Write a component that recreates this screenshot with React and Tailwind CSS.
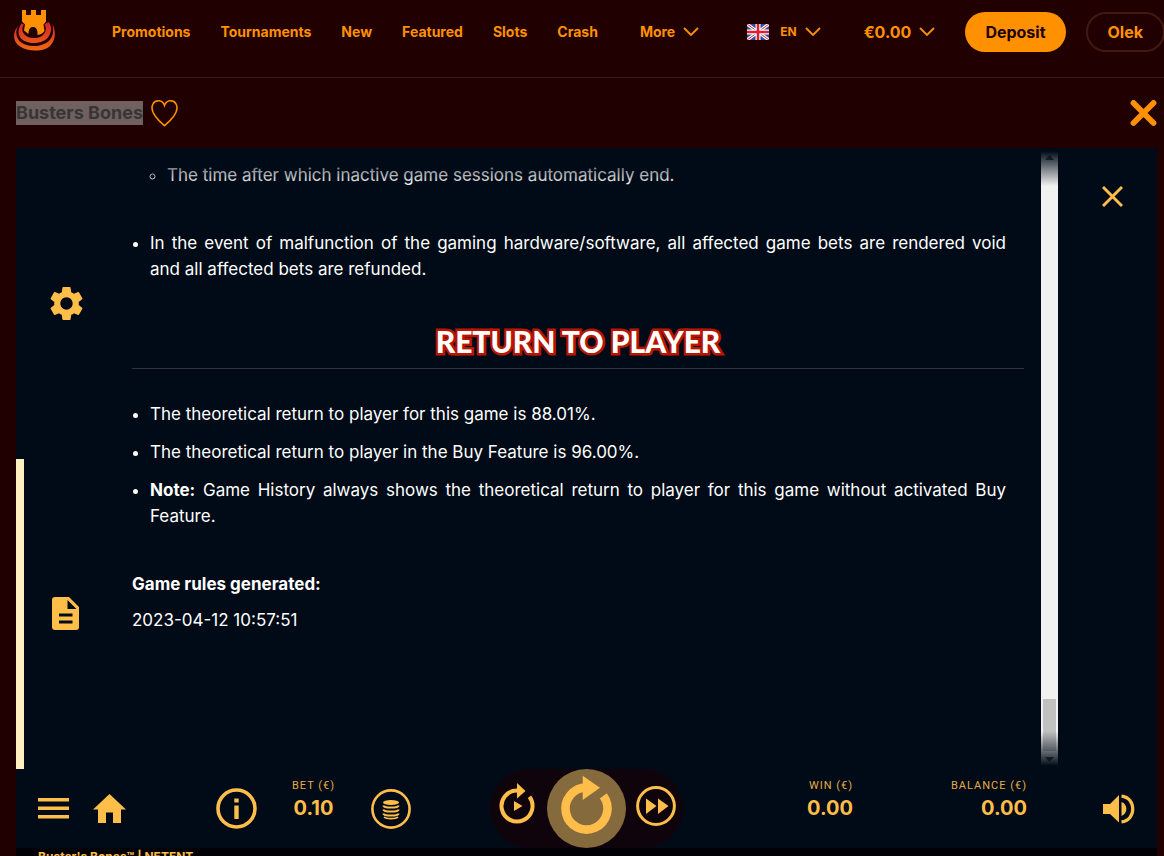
import React, { useState } from 'react';

const navLinks = ['Promotions', 'Tournaments', 'New', 'Featured', 'Slots', 'Crash'];

const Chevron = () => (
  <svg width="16" height="10" viewBox="0 0 16 10" fill="none" stroke="currentColor" strokeWidth="1.8" aria-hidden="true">
    <path d="M1 1 8 8 15 1" />
  </svg>
);

const Logo = () => (
  <svg width="42" height="42" viewBox="0 0 42 42" aria-hidden="true">
    <defs>
      <linearGradient id="ring" x1="0" y1="12" x2="0" y2="41" gradientUnits="userSpaceOnUse">
        <stop offset="0" stopColor="#d3202f" />
        <stop offset="1" stopColor="#f06a12" />
      </linearGradient>
    </defs>
    <path fill="url(#ring)" d="M4 16C-2 23-1 32 6 36.500C14 42 30 42 36 36C42 30 42 21 38.500 14C40.500 23 38 30 31 33.500C24 37 14 37 8 33C2 29 1 22 4 16Z" />
    <path fill="url(#ring)" d="M7.500 13.500C3 20 3.500 27 10 30.800C17 34.300 27 33.800 32.500 29C38 24 38.500 16.500 34.500 12L30.500 14.500C33.500 19 31 24 27 26.500C21 29 14.500 28.500 11 25C8 22 7.500 18 10 14.500Z" />
    <path fill="#ff9100" d="M8 0H12V5H17V0H22V5H27V0H32V11.500L29.500 14.500L30.500 21C29 23.500 26.500 24.500 23.500 25C24 19.500 22 17 19 17C16 17 14.500 19.500 14.500 24L10 20.500L11 14.500L8 11.500Z" />
  </svg>
);

const Flag = () => (
  <svg width="22" height="16" viewBox="0 0 22 16" aria-hidden="true">
    <rect width="22" height="16" fill="#2a4c9b" />
    <path d="M0 0 22 16M22 0 0 16" stroke="#fff" strokeWidth="3.200" />
    <path d="M0 0 22 16M22 0 0 16" stroke="#d8202f" strokeWidth="1" />
    <path d="M11 0V16M0 8H22" stroke="#fff" strokeWidth="5" />
    <path d="M11 0V16M0 8H22" stroke="#d8202f" strokeWidth="2.600" />
  </svg>
);

const Header = () => (
  <header className="flex justify-between overflow-hidden border-b border-[#42190f] pt-3 pb-[25px] pl-[14px] text-sm font-bold text-[#ff9100]">
    <div className="flex h-10 shrink-0 items-center">
      <a href="#home" aria-label="Home" className="-mt-0.5"><Logo /></a>
      <nav className="ml-14 flex items-center gap-[30px]">
        {navLinks.map(name => (
          <a key={name} href={`#${name.toLowerCase()}`}>{name}</a>
        ))}
        <button type="button" className="ml-3 flex items-center gap-2">
          More <Chevron />
        </button>
      </nav>
    </div>
    <div className="-mr-px flex h-10 shrink-0 items-center">
      <button type="button" className="flex items-center text-xs">
        <Flag />
        <span className="mr-2 ml-[11px]">EN</span>
        <Chevron />
      </button>
      <button type="button" className="ml-[43px] flex items-center gap-2 text-base">
        €0.00 <Chevron />
      </button>
      <button type="button" className="ml-[30px] h-10 rounded-full bg-[#ff9100] px-5 text-base text-[#210001]">
        Deposit
      </button>
      <button type="button" className="ml-5 h-10 rounded-full border-2 border-[#42190f] px-5 text-base">
        Olek
      </button>
    </div>
  </header>
);

const SideTab = ({ label, active, onClick, children }) => (
  <button
    type="button"
    aria-label={label}
    onClick={onClick}
    className={`flex flex-1 items-center justify-center border-l-8 pr-2 ${active ? 'border-[#fff0bf]' : 'border-transparent'}`}
  >
    {children}
  </button>
);

const Rules = () => (
  <div className="relative flex min-w-0 flex-1 overflow-hidden">
    <div className="min-w-0 flex-1 pt-[14px] pr-[17px] pl-4 text-[17px] leading-[26px] text-white">
      <ul className="list-disc px-[18px] text-justify">
        <li className="list-none">
          <ul className="list-[circle] pl-[17px]">
            <li>The time after which inactive game sessions automatically end.</li>
          </ul>
        </li>
        <li className="mt-[42px]">
          In the event of malfunction of the gaming hardware/software, all affected game bets are rendered void and all affected bets are refunded.
        </li>
      </ul>

      <h2 className="mt-[41px] border-b border-[#333437] pb-[9px] text-center font-['Lato',sans-serif] text-[30px] leading-9 font-black uppercase [-webkit-text-stroke:5px_#b81503] [paint-order:stroke_fill]">
        Return to player
      </h2>

      <ul className="mt-8 list-disc space-y-3 px-[18px] text-justify">
        <li>The theoretical return to player for this game is 88.01%.</li>
        <li>The theoretical return to player in the Buy Feature is 96.00%.</li>
        <li>
          <b>Note:</b> Game History always shows the theoretical return to player for this game without activated Buy Feature.
        </li>
      </ul>

      <p className="mt-[42px] font-bold">Game rules generated:</p>
      <p className="mt-[10px]">2023-04-12 10:57:51</p>
    </div>

    {/* Scroll track */}
    <div className="my-[3px] flex w-[17px] flex-col items-center justify-between bg-[#f1f1f1] py-1">
      <svg width="9" height="5" viewBox="0 0 9 5" className="shrink-0" aria-hidden="true"><path d="M0 5 4.500 0 9 5Z" fill="#505050" /></svg>
      <div className="flex flex-col items-center gap-[6px]">
        <div className="h-[52px] w-[13px] bg-[#c1c1c1]" />
        <svg width="9" height="5" viewBox="0 0 9 5" aria-hidden="true"><path d="M0 0 4.500 5 9 0Z" fill="#505050" /></svg>
      </div>
    </div>

    {/* Fades over the top and bottom edge */}
    <div className="pointer-events-none absolute inset-x-0 top-[3px] h-[35px] bg-linear-to-b from-[#000b17] to-transparent" />
    <div className="pointer-events-none absolute inset-x-0 bottom-[3px] h-[35px] bg-linear-to-t from-[#000b17] to-transparent" />
  </div>
);

const Amount = ({ label, value, className }) => (
  <div className={className}>
    <div className="font-['Roboto',sans-serif] text-[11px] leading-[18px] tracking-[1px] whitespace-nowrap opacity-90">{label}</div>
    <div className="text-xl leading-[26px] font-bold">{value}</div>
  </div>
);

const ControlBar = () => (
  <div className="grid h-[79px] shrink-0 grid-cols-[1fr_auto_1fr] items-center px-[22px] text-[#ffbd4a]">
    <div className="flex items-center">
      <button type="button" aria-label="Menu">
        <svg width="31" height="21" viewBox="0 0 31 21" fill="currentColor"><path d="M0 0H31V3.500H0ZM0 8.500H31V12H0ZM0 17H31V20.500H0Z" /></svg>
      </button>
      <button type="button" aria-label="Lobby" className="ml-6">
        <svg width="33" height="29" viewBox="0 0 33 29" fill="currentColor"><path d="M16.500 0 33 15.500H28V29H20V18.500H13V29H5V15.500H0Z" /></svg>
      </button>
      <button type="button" aria-label="Info" className="ml-[90px]">
        <svg width="41" height="41" viewBox="0 0 41 41" fill="currentColor">
          <circle cx="20.500" cy="20.500" r="18.500" fill="none" stroke="currentColor" strokeWidth="3.600" />
          <path d="M18.300 10.500H22.700V14.500H18.300ZM18.300 17.500H22.700V31H18.300Z" />
        </svg>
      </button>
      <Amount label="BET (€)" value="0.10" className="ml-[35px] -mt-5 text-center" />
      <button type="button" aria-label="Bet level" className="ml-9">
        <svg width="40" height="40" viewBox="0 0 40 40" fill="none" stroke="currentColor">
          <circle cx="20" cy="20" r="18.600" strokeWidth="2.600" />
          <ellipse cx="20" cy="13.500" rx="8" ry="2.400" fill="currentColor" stroke="none" />
          <path strokeWidth="2" d="M12.300 16.500C13 19.300 27 19.300 27.700 16.500M12.300 20.500C13 23.300 27 23.300 27.700 20.500M12.300 24.500C13 27.300 27 27.300 27.700 24.500" />
          <path strokeWidth="1.800" d="M13 28C15 30.200 25 30.200 27 28" />
        </svg>
      </button>
    </div>

    <div className="flex items-center gap-[10px] rounded-full bg-[#10040c] px-[7px]">
      <button type="button" aria-label="Autoplay">
        <svg width="40" height="60" viewBox="0 0 40 60" fill="currentColor">
          <path d="M20 11.500A15.500 15.500 0 1 0 32.500 17.800" fill="none" stroke="currentColor" strokeWidth="4" />
          <path d="M20 4 28.500 12 20 19.500Z" />
          <path d="M17 22 25.500 27 17 32Z" />
        </svg>
      </button>
      <button type="button" aria-label="Spin" className="rounded-full bg-[#846a3d]">
        <svg width="79" height="79" viewBox="0 0 79 79" fill="currentColor">
          <path d="M39.500 18.500A21 21 0 1 0 56.300 26.900" fill="none" stroke="currentColor" strokeWidth="8.600" />
          <path d="M35.700 6.700 53 18.700 35.700 31Z" />
        </svg>
      </button>
      <button type="button" aria-label="Fast play">
        <svg width="40" height="46" viewBox="0 0 40 46" fill="currentColor">
          <circle cx="20" cy="20" r="18.400" fill="none" stroke="currentColor" strokeWidth="3" />
          <path d="M10 12.500 20.500 20 10 28ZM22 12.500 32.500 20 22 28Z" />
        </svg>
      </button>
    </div>

    <div className="flex items-center justify-end">
      <Amount label="WIN (€)" value="0.00" className="-mt-5 text-right" />
      <Amount label="BALANCE (€)" value="0.00" className="-mt-5 ml-[98px] text-right" />
      <button type="button" aria-label="Sound" className="ml-[76px]">
        <svg width="32" height="30" viewBox="0 0 32 30" fill="currentColor">
          <path d="M0 10H7L16 1V28.500L7 20H0Z" />
          <path d="M18.500 8C25 10 25 19.500 18.500 22Z" />
          <path d="M18.500 2.200C33.500 3.500 33.500 26.500 18.500 27.800" fill="none" stroke="currentColor" strokeWidth="3.200" />
        </svg>
      </button>
    </div>
  </div>
);

const App = () => {
  const [tab, setTab] = useState('rules');

  return (
    <div className="flex h-screen flex-col overflow-hidden bg-[#210001] font-['Inter',sans-serif]">
      <Header />

      <div className="flex h-[70px] shrink-0 items-center pr-[7px] pl-4 text-[#ff9100]">
        <h1 className="bg-[#706060] text-lg leading-6 font-bold text-[#363636]">Busters Bones</h1>
        <button type="button" aria-label="Add to favourites" className="ml-2">
          <svg width="27" height="27" viewBox="0 0 27 27" fill="none" stroke="currentColor" strokeWidth="1.500">
            <path d="M13.500 5.500C11.500-.5 4.500-.3 2 3.800C-.2 8 1.500 12.500 4.500 16.500C7.500 20.500 10.500 23 13.500 25.800C16.500 23 19.500 20.500 22.500 16.500C25.500 12.500 27.200 8 25 3.800C22.500-.3 15.500-.5 13.500 5.500Z" />
          </svg>
        </button>
        <button type="button" aria-label="Close game" className="ml-auto">
          <svg width="27" height="27" viewBox="0 0 27 27" stroke="currentColor" strokeWidth="5.800" strokeLinecap="round">
            <path d="M3.500 3 23.500 23M23.500 3 3.500 23" />
          </svg>
        </button>
      </div>

      <main className="mr-[7px] ml-4 flex min-h-0 flex-1 flex-col bg-[#000b17]">
        <div className="flex min-h-0 flex-1">
          <div className="flex w-[100px] shrink-0 flex-col text-[#ffbd4a]">
            <SideTab label="Settings" active={tab === 'settings'} onClick={() => setTab('settings')}>
              <svg width="41" height="41" viewBox="0 0 24 24" fill="currentColor">
                <path d="M19.140 12.940c.04-.3.06-.61.06-.94s-.02-.64-.07-.94l2.030-1.580a.49.49 0 0 0 .12-.61l-1.920-3.320a.488.488 0 0 0-.59-.22l-2.390.96c-.5-.38-1.030-.7-1.620-.94l-.36-2.540a.484.484 0 0 0-.48-.41h-3.840c-.24 0-.43.17-.47.41l-.36 2.540c-.59.24-1.130.57-1.620.94l-2.390-.96c-.22-.08-.47 0-.59.22L2.740 8.870c-.12.21-.08.47.12.61l2.030 1.580c-.05.3-.09.63-.09.94s.02.64.07.94l-2.030 1.580a.49.49 0 0 0-.12.61l1.920 3.320c.12.22.37.29.59.22l2.390-.96c.5.38 1.030.7 1.620.94l.36 2.540c.05.24.24.41.48.41h3.840c.24 0 .44-.17.47-.41l.36-2.540c.59-.24 1.130-.56 1.620-.94l2.390.96c.22.08.47 0 .59-.22l1.920-3.320c.12-.22.07-.47-.12-.61l-2.010-1.580zM12 15.600c-1.980 0-3.600-1.620-3.600-3.600s1.620-3.600 3.600-3.600 3.600 1.620 3.600 3.600-1.620 3.600-3.600 3.600z" />
              </svg>
            </SideTab>
            <SideTab label="Game rules" active={tab === 'rules'} onClick={() => setTab('rules')}>
              <svg width="28" height="34" viewBox="0 0 28 34" fill="currentColor" fillRule="evenodd">
                <path d="M3 0H17L27 10V30Q27 33 24 33H3Q0 33 0 30V3Q0 0 3 0ZM15.500 3V12H24.500ZM7 16.500V19.500H20.500V16.500ZM7 23.500V26.500H20.500V23.500Z" />
              </svg>
            </SideTab>
          </div>

          <Rules />

          <div className="flex w-[99px] shrink-0 items-start justify-center pt-[38px] pl-[10px] text-[#ffbd4a]">
            <button type="button" aria-label="Close rules">
              <svg width="21" height="21" viewBox="0 0 21 21" stroke="currentColor" strokeWidth="2.900">
                <path d="M1 1 20 20M20 1 1 20" />
              </svg>
            </button>
          </div>
        </div>

        <ControlBar />
      </main>

      <footer className="mr-[7px] ml-4 h-2 shrink-0 overflow-hidden bg-[#020206] pl-[22px] text-xs leading-[18px] font-bold text-[#ffbd4a]">
        Buster's Bones™ <span>|</span> NETENT
      </footer>
    </div>
  );
};

export default App;
